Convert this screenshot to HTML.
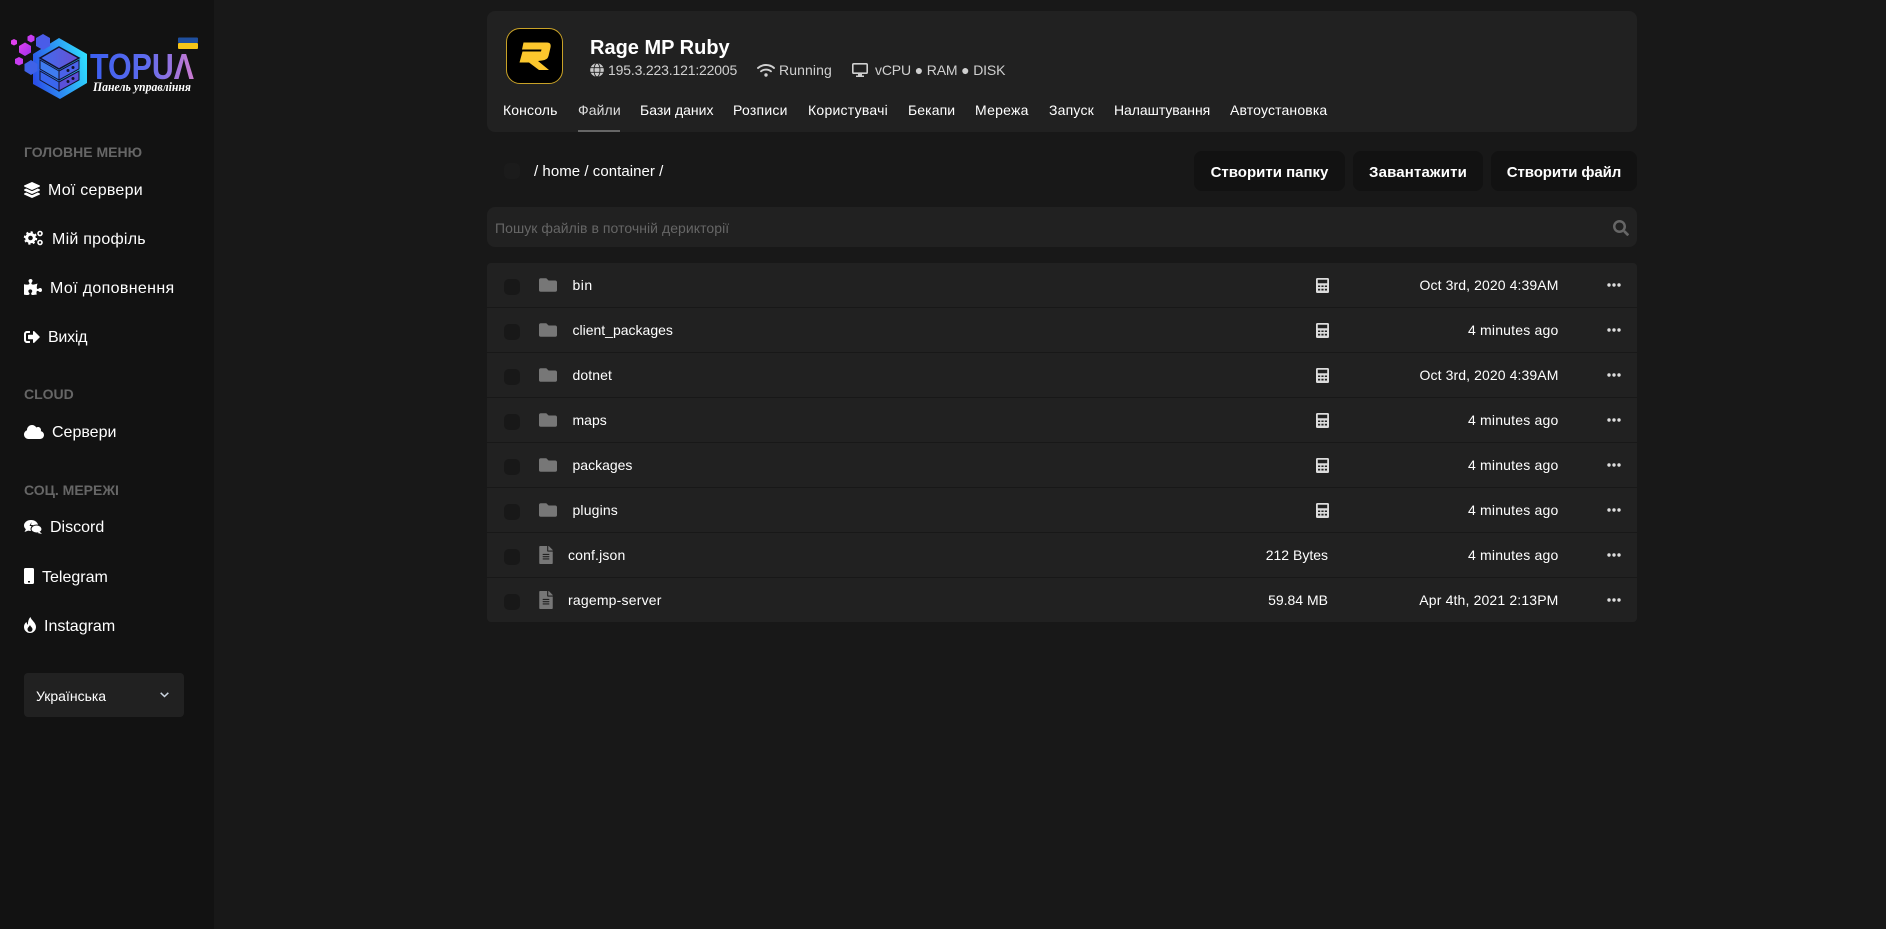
<!DOCTYPE html>
<html lang="uk">
<head>
<meta charset="utf-8">
<title>Файли</title>
<style>
*{box-sizing:border-box;margin:0;padding:0}
html,body{width:1886px;height:929px;overflow:hidden;background:#181818;font-family:"Liberation Sans",sans-serif;color:#fff}
.a{position:absolute}
.t{position:absolute;white-space:nowrap;transform:translateY(-10px);line-height:20px;height:20px}
.r{transform:translate(-100%,-10px)}
svg{position:absolute;display:block;overflow:visible}
#side{left:0;top:0;width:214px;height:929px;background:#121212}
.h{left:24px;font-size:14px;font-weight:700;color:#666}
.m{font-size:16px;color:#fff;margin-top:1px}
.card{background:#212121}
.tab{font-size:14px;top:110px;color:#fff}
.btn{top:151px;height:40px;line-height:43px;text-align:center;background:#121212;border-radius:8px;font-weight:700;font-size:15px}
.row{left:487px;width:1150px;height:44px;background:#212121}
.cb{left:504px;width:16px;height:16px;border-radius:5px;background:#181818}
.f{font-size:14px;color:#fff}
.ago{letter-spacing:.2px}
.dt{letter-spacing:.1px}
.inf{font-size:14px;color:#d0d0d0;top:70px}
</style>
</head>
<body>
<div id="side" class="a"></div>

<!-- logo -->
<svg style="left:0;top:0" width="214" height="110" viewBox="0 0 214 110">
<defs>
<linearGradient id="g1" x1="0" x2="1" y1="0.6" y2="0.3"><stop offset="0" stop-color="#2b4fe8"/><stop offset="1" stop-color="#2fe0ff"/></linearGradient>
<linearGradient id="g2" x1="0" x2="1" y1="0" y2="0"><stop offset="0" stop-color="#3f6df0"/><stop offset="1" stop-color="#6a4fd0"/></linearGradient>
<linearGradient id="g3" x1="0" x2="1" y1="0" y2="0"><stop offset="0" stop-color="#3a5ff0"/><stop offset="0.55" stop-color="#5f6cee"/><stop offset="1" stop-color="#cc7ad0"/></linearGradient>
<linearGradient id="g4" x1="0" x2="1" y1="0" y2="1"><stop offset="0" stop-color="#e040f0"/><stop offset="1" stop-color="#a030e8"/></linearGradient>
</defs>
<polygon points="59,38 87,54 87,83 60,99 33,84 33,54" fill="url(#g1)"/>
<polygon points="59,47 79,58 59,69 40,58" fill="url(#g2)" stroke="#12122a" stroke-width="1.500"/>
<polygon points="40,60 59,71 59,80 40,69" fill="#3f7cf0" stroke="#12122a" stroke-width="1"/>
<polygon points="59,71 79,60 79,69 59,80" fill="#4a62e8" stroke="#12122a" stroke-width="1"/>
<polygon points="40,71 59,82 59,91 40,80" fill="#3a66ee" stroke="#12122a" stroke-width="1"/>
<polygon points="59,82 79,71 79,80 59,91" fill="#5a50d8" stroke="#12122a" stroke-width="1"/>
<circle cx="68" cy="70.500" r="1.500" fill="#12122a"/><circle cx="73" cy="67.500" r="1.500" fill="#12122a"/>
<circle cx="68" cy="81.500" r="1.500" fill="#12122a"/><circle cx="73" cy="78.500" r="1.500" fill="#12122a"/>
<polygon points="14,39 17,40.500 17,44 14,45.500 11,44 11,40.500" fill="#e040f0"/>
<polygon points="31,34.500 34.500,36.500 34.500,40.500 31,42.500 27.500,40.500 27.500,36.500" fill="#c83cf0"/>
<polygon points="25,42.500 31,46 31,52.500 25,56 19,52.500 19,46" fill="url(#g4)"/>
<polygon points="19,57 23,59 23,63.500 19,65.500 15,63.500 15,59" fill="#c83cf0"/>
<polygon points="43,34 50,38 50,46 43,50 36,46 36,38" fill="#4a5ce8"/>
<polygon points="31,60 37.500,64 37.500,71 31,75 24.500,71 24.500,64" fill="#3f62e8"/>
<text x="90" y="79" font-family="Liberation Sans,sans-serif" font-weight="700" font-size="36" fill="url(#g3)" textLength="104" lengthAdjust="spacingAndGlyphs">TOPUΛ</text>
<text x="93" y="91" font-family="Liberation Serif,serif" font-style="italic" font-weight="700" font-size="12.500" fill="#fff" textLength="98" lengthAdjust="spacingAndGlyphs">Панель управління</text>
<rect x="178" y="37.500" width="20" height="5.500" rx="1" fill="#1f4f9e"/>
<rect x="178" y="43" width="20" height="6" rx="1" fill="#f5c518"/>
</svg>

<!-- sidebar -->
<div class="t h" style="top:152px">ГОЛОВНЕ МЕНЮ</div>
<svg style="left:24px;top:182px" width="16" height="16" viewBox="0 0 512 512" fill="#fff"><path d="M12.41 148.02l232.94 105.67c6.8 3.09 14.49 3.09 21.29 0l232.94-105.67c16.55-7.51 16.55-32.52 0-40.03L266.65 2.31a25.607 25.607 0 0 0-21.29 0L12.41 107.98c-16.55 7.51-16.55 32.53 0 40.04zm487.18 88.28l-58.09-26.33-161.64 73.27c-7.56 3.43-15.59 5.17-23.86 5.17s-16.29-1.74-23.86-5.17L70.51 209.97l-58.1 26.33c-16.55 7.5-16.55 32.5 0 40l232.94 105.59c6.8 3.08 14.49 3.08 21.29 0L499.59 276.3c16.55-7.5 16.55-32.5 0-40zm0 127.8l-57.87-26.23-161.86 73.37c-7.56 3.43-15.59 5.17-23.86 5.17s-16.29-1.74-23.86-5.17L70.29 337.87 12.41 364.1c-16.55 7.5-16.55 32.5 0 40l232.94 105.59c6.8 3.08 14.49 3.08 21.29 0L499.59 404.1c16.55-7.5 16.55-32.5 0-40z"/></svg>
<div class="t m" style="left:48px;top:190px;letter-spacing:.25px">Мої сервери</div>
<svg style="left:24px;top:230px" width="20" height="16" viewBox="0 0 20 16"><circle cx="6.500" cy="8" r="3.800" fill="none" stroke="#fff" stroke-width="3"/><circle cx="6.500" cy="8" r="5.800" fill="none" stroke="#fff" stroke-width="1.800" stroke-dasharray="2.200 2.350"/><circle cx="16" cy="3.500" r="2" fill="none" stroke="#fff" stroke-width="1.600"/><circle cx="16" cy="12.500" r="2" fill="none" stroke="#fff" stroke-width="1.600"/></svg>
<div class="t m" style="left:52px;top:239px;letter-spacing:.25px">Мій профіль</div>
<svg style="left:24px;top:279px" width="18" height="16" viewBox="0 0 576 512" fill="#fff"><path d="M519.442 288.651c-41.519 0-59.5 31.593-82.058 31.593C377.409 320.244 432 144 432 144s-196.288 80-196.288-3.297c0-35.827 36.288-46.25 36.288-85.985C272 19.216 243.885 0 210.539 0c-34.654 0-66.366 18.891-66.366 56.346 0 41.364 31.711 59.277 31.711 81.75C175.885 207.719 0 166.758 0 166.758v333.237s178.635 41.047 178.635-28.662c0-22.473-40-40.107-40-81.471 0-37.456 29.25-56.346 63.577-56.346 33.673 0 61.788 19.216 61.788 54.717 0 39.735-36.288 50.158-36.288 85.985 0 60.803 129.675 25.730 181.230 25.730 0 0-34.725-120.101 25.827-120.101 35.962 0 46.423 36.152 86.308 36.152C556.712 416 576 387.99 576 354.443c0-34.199-18.962-65.792-56.558-65.792z"/></svg>
<div class="t m" style="left:50px;top:288px;letter-spacing:.35px">Мої доповнення</div>
<svg style="left:24px;top:329px" width="16" height="16" viewBox="0 0 512 512" fill="#fff"><path d="M497 273L329 441c-15 15-41 4.5-41-17v-96H152c-13.3 0-24-10.7-24-24v-96c0-13.3 10.7-24 24-24h136V88c0-21.4 25.9-32 41-17l168 168c9.3 9.4 9.3 24.6 0 34zM192 436v-40c0-6.6-5.4-12-12-12H96c-17.7 0-32-14.3-32-32V160c0-17.7 14.3-32 32-32h84c6.6 0 12-5.4 12-12V76c0-6.6-5.400-12-12-12H96c-53 0-96 43-96 96v192c0 53 43 96 96 96h84c6.600 0 12-5.400 12-12z"/></svg>
<div class="t m" style="left:48px;top:337px;letter-spacing:-.25px">Вихід</div>

<div class="t h" style="top:394px">CLOUD</div>
<svg style="left:24px;top:424px" width="20" height="16" viewBox="0 0 640 512" fill="#fff"><path d="M537.6 226.6c4.1-10.7 6.4-22.4 6.4-34.6 0-53-43-96-96-96-19.7 0-38.1 6-53.3 16.2C367 64.2 315.3 32 256 32c-88.4 0-160 71.6-160 160 0 2.7.1 5.4.2 8.1C40.2 219.8 0 273.2 0 336c0 79.5 64.5 144 144 144h368c70.7 0 128-57.3 128-128 0-61.9-44-113.6-102.4-125.4z"/></svg>
<div class="t m" style="left:52px;top:432px">Сервери</div>

<div class="t h" style="top:490px">СОЦ. МЕРЕЖІ</div>
<svg style="left:24px;top:520px" width="18" height="14" viewBox="0 0 18 14"><ellipse cx="7" cy="5.500" rx="7" ry="5.500" fill="#fff"/><path d="M2 9l-1.500 3 4-1.500z" fill="#fff"/><ellipse cx="12.500" cy="9" rx="5.500" ry="4" fill="#fff" stroke="#121212" stroke-width="1"/><path d="M15.500 11.500l2.500 2.500-4.500-1z" fill="#fff"/><path d="M7.500 2L5.500 6h2l-1 3 2.500-4H7z" fill="#121212"/></svg>
<div class="t m" style="left:50px;top:527px">Discord</div>
<svg style="left:24px;top:568px" width="10" height="16" viewBox="0 0 10 16"><rect width="10" height="16" rx="1.500" fill="#fff"/><rect x="4" y="13" width="2" height="1.500" fill="#121212"/></svg>
<div class="t m" style="left:42px;top:577px">Telegram</div>
<svg style="left:24px;top:617px" width="12" height="16" viewBox="0 0 12 16"><path d="M6.500 0C7 3 12 5.500 12 10a6 6 0 0 1-12 0c0-2.500 1.200-4 2.500-5 .2 1.500.8 2.300 1.500 2.800C3.800 5 4.500 2 6.500 0z" fill="#fff"/><path d="M6 8c.3 1.500 2.500 2.300 2.500 4.300a2.500 2.500 0 0 1-5 0C3.500 10.500 5.500 9.500 6 8z" fill="#121212"/></svg>
<div class="t m" style="left:44px;top:626px">Instagram</div>

<div class="a" style="left:24px;top:673px;width:160px;height:44px;background:#212121;border-radius:4px"></div>
<div class="t" style="left:36px;top:696px;font-size:14px">Українська</div>
<svg style="left:159.500px;top:692px" width="9" height="6" viewBox="0 0 9 6"><path d="M.7.8L4.500 4.500 8.300.8" fill="none" stroke="#cbd5e0" stroke-width="1.500"/></svg>

<!-- server card -->
<div class="a card" style="left:487px;top:11px;width:1150px;height:121px;border-radius:8px"></div>
<div class="a" style="left:506px;top:28px;width:57px;height:56px;background:#000;border:1px solid #c9a227;border-radius:14px"></div>
<svg style="left:506px;top:28px" width="57" height="56" viewBox="0 0 57 56"><path d="M17.500 14.500H41Q45.500 14.500 44.500 19.500L42.500 28Q41.500 32 36 32.500L32 33 43 42H33L23 34.500H13.500L16.500 23.500H35L35.500 21.500H16Z" fill="#fcc72d"/></svg>
<div class="t" style="left:590px;top:48px;font-size:20px;font-weight:700">Rage MP Ruby</div>
<svg style="left:590px;top:63px" width="14" height="14" viewBox="0 0 14 14"><circle cx="7" cy="7" r="6.800" fill="#c8c8c8"/><g fill="none" stroke="#212121" stroke-width=".9"><ellipse cx="7" cy="7" rx="3" ry="6.800"/><path d="M.5 4.700h13M.5 9.300h13"/></g></svg>
<div class="t inf" style="left:608px;letter-spacing:-.17px">195.3.223.121:22005</div>
<svg style="left:757px;top:63px" width="18" height="14" viewBox="0 0 18 14"><g fill="none" stroke="#d0d0d0" stroke-width="1.900" stroke-linecap="round"><path d="M1 5c4.500-4 11.500-4 16 0"/><path d="M4 8.300c2.800-2.300 7.200-2.300 10 0"/></g><circle cx="9" cy="12" r="1.700" fill="#d0d0d0"/></svg>
<div class="t inf" style="left:779px;letter-spacing:.1px">Running</div>
<svg style="left:852px;top:63px" width="16" height="14" viewBox="0 0 16 14"><rect x=".8" y=".8" width="14.400" height="9.400" rx="1" fill="none" stroke="#d0d0d0" stroke-width="1.600"/><path d="M6 11h4v1.500h2V14H4v-1.500h2z" fill="#d0d0d0"/></svg>
<div class="t inf" style="left:875px;letter-spacing:-.15px">vCPU ● RAM ● DISK</div>

<div class="t tab" style="left:503px;letter-spacing:.1px">Консоль</div>
<div class="t tab" style="left:578px;color:#ddd;letter-spacing:.1px">Файли</div>
<div class="t tab" style="left:640px">Бази даних</div>
<div class="t tab" style="left:733px;letter-spacing:.25px">Розписи</div>
<div class="t tab" style="left:808px;letter-spacing:.25px">Користувачі</div>
<div class="t tab" style="left:908px;letter-spacing:.1px">Бекапи</div>
<div class="t tab" style="left:975px;letter-spacing:.25px">Мережа</div>
<div class="t tab" style="left:1049px;letter-spacing:.2px">Запуск</div>
<div class="t tab" style="left:1114px;letter-spacing:-.05px">Налаштування</div>
<div class="t tab" style="left:1230px;letter-spacing:.15px">Автоустановка</div>
<div class="a" style="left:578px;top:130px;width:42px;height:2px;background:#666"></div>

<!-- toolbar -->
<div class="a cb" style="top:163px;background:#1b1b1b"></div>
<div class="t" style="left:534px;top:172px;font-size:15px;letter-spacing:.05px">/ home / container /</div>
<div class="a btn" style="left:1194px;width:151px">Створити папку</div>
<div class="a btn" style="left:1353px;width:130px;letter-spacing:.15px">Завантажити</div>
<div class="a btn" style="left:1491px;width:146px;letter-spacing:-.1px">Створити файл</div>

<!-- search -->
<div class="a card" style="left:487px;top:207px;width:1150px;height:40px;border-radius:8px"></div>
<div class="t" style="left:495px;top:228px;font-size:14px;letter-spacing:.05px;color:#666">Пошук файлів в поточній дерикторії</div>
<svg style="left:1613px;top:220px" width="16" height="16" viewBox="0 0 512 512" fill="#666"><path d="M505 442.7L405.3 343c-4.5-4.5-10.6-7-17-7H372c27.6-35.3 44-79.7 44-128C416 93.1 322.9 0 208 0S0 93.1 0 208s93.1 208 208 208c48.3 0 92.7-16.4 128-44v16.3c0 6.4 2.5 12.5 7 17l99.7 99.7c9.4 9.4 24.6 9.4 33.9 0l28.3-28.3c9.4-9.4 9.4-24.6.1-34zM208 336c-70.7 0-128-57.2-128-128 0-70.7 57.2-128 128-128 70.7 0 128 57.2 128 128 0 70.7-57.2 128-128 128z"/></svg>

<svg width="0" height="0" style="position:absolute"><defs>
<symbol id="folder" viewBox="0 0 512 512"><path fill="#777" d="M464 128H272l-64-64H48C21.49 64 0 85.49 0 112v288c0 26.51 21.49 48 48 48h416c26.51 0 48-21.49 48-48V176c0-26.51-21.49-48-48-48z"/></symbol>
<symbol id="file" viewBox="0 0 384 512"><path fill="#777" d="M224 136V0H24C10.7 0 0 10.7 0 24v464c0 13.3 10.7 24 24 24h336c13.3 0 24-10.7 24-24V160H248c-13.2 0-24-10.8-24-24zm64 236c0 6.6-5.4 12-12 12H108c-6.6 0-12-5.4-12-12v-8c0-6.6 5.4-12 12-12h168c6.6 0 12 5.4 12 12v8zm0-64c0 6.6-5.4 12-12 12H108c-6.6 0-12-5.4-12-12v-8c0-6.6 5.4-12 12-12h168c6.6 0 12 5.4 12 12v8zm0-72v8c0 6.6-5.4 12-12 12H108c-6.6 0-12-5.4-12-12v-8c0-6.6 5.4-12 12-12h168c6.6 0 12 5.4 12 12zm96-114.1v6.1H256V0h6.1c6.4 0 12.500 2.500 17 7l97.900 98c4.500 4.500 7 10.600 7 16.900z"/></symbol>
<symbol id="calc" viewBox="0 0 13 15"><path fill-rule="evenodd" fill="#ddd" d="M1.300 0h10.400C12.400 0 13 .6 13 1.300v12.400c0 .7-.6 1.300-1.300 1.300H1.300C.6 15 0 14.400 0 13.700V1.300C0 .6.600 0 1.300 0zM1.800 1.800v3.400h9.400V1.800zM2 7.500v1.500h2.200V7.500zM5.400 7.500v1.500h2.200V7.500zM8.800 7.500v1.500H11V7.500zM2 10.700v1.800h2.200v-1.800zM5.400 10.700v1.800h2.200v-1.800zM8.800 10.700v1.800H11v-1.800z"/></symbol>
<symbol id="dots" viewBox="0 0 14 4"><circle cx="2" cy="2" r="1.700" fill="#ddd"/><circle cx="7" cy="2" r="1.700" fill="#ddd"/><circle cx="12" cy="2" r="1.700" fill="#ddd"/></symbol>
</defs></svg>

<!-- rows -->
<div class="a row" style="top:263px;border-radius:4px 4px 0 0"></div>
<div class="a row" style="top:308px"></div>
<div class="a row" style="top:353px"></div>
<div class="a row" style="top:398px"></div>
<div class="a row" style="top:443px"></div>
<div class="a row" style="top:488px"></div>
<div class="a row" style="top:533px"></div>
<div class="a row" style="top:578px;border-radius:0 0 4px 4px"></div>

<div class="a cb" style="top:279px"></div><div class="a cb" style="top:324px"></div><div class="a cb" style="top:369px"></div><div class="a cb" style="top:414px"></div><div class="a cb" style="top:459px"></div><div class="a cb" style="top:504px"></div><div class="a cb" style="top:549px"></div><div class="a cb" style="top:594px"></div>

<svg style="left:539px;top:276px" width="18" height="18"><use href="#folder" width="18" height="18"/></svg>
<svg style="left:539px;top:321px" width="18" height="18"><use href="#folder" width="18" height="18"/></svg>
<svg style="left:539px;top:366px" width="18" height="18"><use href="#folder" width="18" height="18"/></svg>
<svg style="left:539px;top:411px" width="18" height="18"><use href="#folder" width="18" height="18"/></svg>
<svg style="left:539px;top:456px" width="18" height="18"><use href="#folder" width="18" height="18"/></svg>
<svg style="left:539px;top:501px" width="18" height="18"><use href="#folder" width="18" height="18"/></svg>
<svg style="left:539px;top:546px" width="14" height="18"><use href="#file" width="14" height="18"/></svg>
<svg style="left:539px;top:591px" width="14" height="18"><use href="#file" width="14" height="18"/></svg>

<div class="t f" style="left:572.500px;top:285px;letter-spacing:.5px">bin</div>
<div class="t f" style="left:572.500px;top:330px">client_packages</div>
<div class="t f" style="left:572.500px;top:375px;letter-spacing:.1px">dotnet</div>
<div class="t f" style="left:572.500px;top:420px">maps</div>
<div class="t f" style="left:572.500px;top:465px">packages</div>
<div class="t f" style="left:572.500px;top:510px;letter-spacing:.15px">plugins</div>
<div class="t f" style="left:568px;top:555px;letter-spacing:.15px">conf.json</div>
<div class="t f" style="left:568px;top:600px;letter-spacing:.2px">ragemp-server</div>

<svg style="left:1316px;top:278px" width="13" height="15"><use href="#calc" width="13" height="15"/></svg>
<svg style="left:1316px;top:323px" width="13" height="15"><use href="#calc" width="13" height="15"/></svg>
<svg style="left:1316px;top:368px" width="13" height="15"><use href="#calc" width="13" height="15"/></svg>
<svg style="left:1316px;top:413px" width="13" height="15"><use href="#calc" width="13" height="15"/></svg>
<svg style="left:1316px;top:458px" width="13" height="15"><use href="#calc" width="13" height="15"/></svg>
<svg style="left:1316px;top:503px" width="13" height="15"><use href="#calc" width="13" height="15"/></svg>
<div class="t f r" style="left:1328px;top:555px">212 Bytes</div>
<div class="t f r" style="left:1328px;top:600px">59.84 MB</div>

<div class="t f r dt" style="left:1558.500px;top:285px">Oct 3rd, 2020 4:39AM</div>
<div class="t f r ago" style="left:1558.500px;top:330px">4 minutes ago</div>
<div class="t f r dt" style="left:1558.500px;top:375px">Oct 3rd, 2020 4:39AM</div>
<div class="t f r ago" style="left:1558.500px;top:420px">4 minutes ago</div>
<div class="t f r ago" style="left:1558.500px;top:465px">4 minutes ago</div>
<div class="t f r ago" style="left:1558.500px;top:510px">4 minutes ago</div>
<div class="t f r ago" style="left:1558.500px;top:555px">4 minutes ago</div>
<div class="t f r" style="left:1558.500px;top:600px;letter-spacing:.15px">Apr 4th, 2021 2:13PM</div>

<svg style="left:1607px;top:283px" width="14" height="4"><use href="#dots" width="14" height="4"/></svg>
<svg style="left:1607px;top:328px" width="14" height="4"><use href="#dots" width="14" height="4"/></svg>
<svg style="left:1607px;top:373px" width="14" height="4"><use href="#dots" width="14" height="4"/></svg>
<svg style="left:1607px;top:418px" width="14" height="4"><use href="#dots" width="14" height="4"/></svg>
<svg style="left:1607px;top:463px" width="14" height="4"><use href="#dots" width="14" height="4"/></svg>
<svg style="left:1607px;top:508px" width="14" height="4"><use href="#dots" width="14" height="4"/></svg>
<svg style="left:1607px;top:553px" width="14" height="4"><use href="#dots" width="14" height="4"/></svg>
<svg style="left:1607px;top:598px" width="14" height="4"><use href="#dots" width="14" height="4"/></svg>
</body>
</html>
